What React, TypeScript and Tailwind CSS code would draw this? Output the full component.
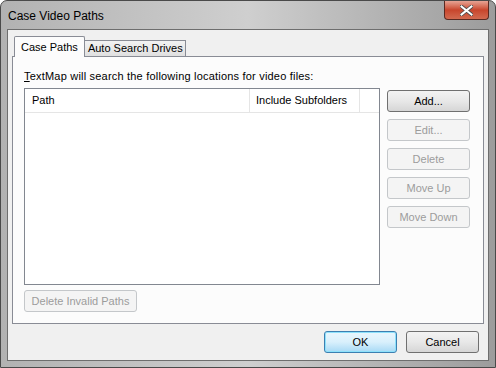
import React from "react";

const font = { fontFamily: '"Liberation Sans", Arial, sans-serif' };

const Btn = ({
  label,
  disabled,
  className = "",
}: {
  label: string;
  disabled?: boolean;
  className?: string;
}) => (
  <div
    className={
      "h-[22px] flex items-center justify-center rounded-[3px] border text-[11px] " +
      (disabled
        ? "border-[#c4c7ca] bg-[#f4f4f4] text-[#9c9c9c] "
        : "border-[#707070] bg-gradient-to-b from-[#f3f3f3] via-[#e8e8e8] to-[#d6d6d6] text-black ") +
      className
    }
  >
    {label}
  </div>
);

export default function App() {
  return (
    <div
      className="w-[496px] h-[368px] flex flex-col rounded-t-[7px] border border-[#4a4a4a] bg-gradient-to-r from-[#b2b2b2] via-[#cfcfcf] to-[#9c9c9c] overflow-hidden"
      style={font}
    >
      {/* title bar */}
      <div className="h-[28px] flex items-start justify-between shrink-0">
        <div className="pl-[7px] pt-[6px] text-[12px] text-black">Case Video Paths</div>
        <div className="mr-[6px] w-[45px] h-[19px] rounded-b-[4px] border border-t-0 border-[#5a2a22] bg-gradient-to-b from-[#e6a394] via-[#c8452c] to-[#d26a50] flex items-center justify-center">
          <svg width="13" height="11" viewBox="0 0 13 11">
            <path
              d="M1.5 1.5 L11.5 9.5 M11.5 1.5 L1.5 9.5"
              stroke="#4a4a4a"
              strokeWidth="3.6"
              strokeLinecap="square"
            />
            <path
              d="M1.5 1.5 L11.5 9.5 M11.5 1.5 L1.5 9.5"
              stroke="#ffffff"
              strokeWidth="2"
              strokeLinecap="square"
            />
          </svg>
        </div>
      </div>

      {/* body */}
      <div className="flex-1 mx-[6px] mb-[6px] border border-[#6e6e6e] bg-[#f0f0f0] flex flex-col px-[4px] pt-[6px]">
        {/* tabs */}
        <div className="flex items-end h-[20px] pl-[2px] relative z-10">
          <div className="h-[21px] -mb-[1px] px-[6px] border border-b-0 border-[#898c95] bg-[#fcfcfc] text-[11px] flex items-center rounded-t-[2px]">
            Case Paths
          </div>
          <div className="h-[16px] pl-[3px] pr-[2px] border border-l-0 border-b-0 border-[#898c95] bg-gradient-to-b from-[#f2f2f2] to-[#e0e0e0] text-[11px] flex items-center">
            Auto Search Drives
          </div>
        </div>

        {/* panel */}
        <div className="h-[268px] border border-[#898c95] bg-[#fcfcfc] flex flex-col px-[11px] pt-[13px]">
          <div className="text-[11px] leading-[13px] text-black tracking-[0.2px]">
            <span className="underline">T</span>extMap will search the following locations for video files:
          </div>
          <div className="flex mt-[5px] gap-[7px]">
            <div className="w-[356px] h-[197px] border border-[#828790] bg-white">
              <div className="flex h-[24px] border-b border-[#e5e5e5] text-[11px]">
                <div className="w-[225px] pl-[7px] flex items-center border-r border-[#e5e5e5]">Path</div>
                <div className="w-[110px] pl-[6px] flex items-center border-r border-[#e5e5e5]">
                  Include Subfolders
                </div>
                <div className="flex-1" />
              </div>
            </div>
            <div className="flex flex-col w-[83px] pt-[2px] gap-[7px]">
              <Btn label="Add..." />
              <Btn label="Edit..." disabled />
              <Btn label="Delete" disabled />
              <Btn label="Move Up" disabled />
              <Btn label="Move Down" disabled />
            </div>
          </div>
          <div className="mt-[5px] w-[113px]">
            <Btn label="Delete Invalid Paths" disabled />
          </div>
        </div>

        {/* footer */}
        <div className="flex justify-end gap-[9px] mt-[7px] pr-[5px]">
          <div className="w-[73px] h-[22px] flex items-center justify-center rounded-[3px] border border-[#3c7fb1] bg-gradient-to-b from-[#eaf6fd] via-[#d9f0fc] to-[#a7d9f5] text-[11px] shadow-[inset_0_0_0_1px_#8ee1fb]">
            OK
          </div>
          <Btn label="Cancel" className="w-[73px]" />
        </div>
      </div>
    </div>
  );
}
